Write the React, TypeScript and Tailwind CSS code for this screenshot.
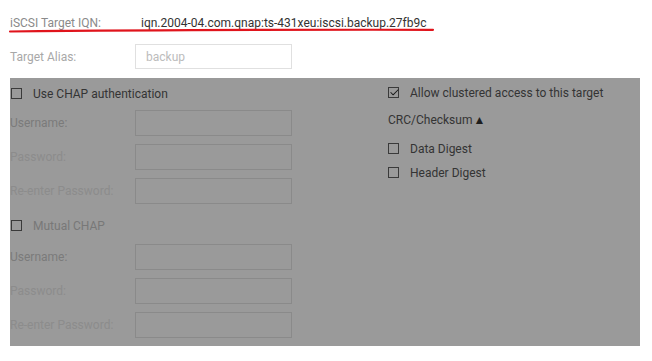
import { Check } from "lucide-react";

function Box({ checked }: { checked?: boolean }) {
	return (
		<span className="relative flex h-[11px] w-[11px] shrink-0 items-center justify-center border border-[#3a3a3a]">
			{checked ? <Check className="absolute -top-[1px] left-0 h-[11px] w-[11px] text-[#1a1a1a]" strokeWidth={2.2} /> : null}
		</span>
	);
}

function Field({ label, tone }: { label: string; tone: string }) {
	return (
		<div className="flex h-[26px] items-center">
			<span className={`w-[125px] ${tone}`}>{label}</span>
			<div className="h-[26px] w-[157px] border border-[#8a8a8a]" />
		</div>
	);
}

export default function App() {
	return (
		<div
			className="relative min-h-[361px] w-[652px] bg-white pl-[10px] pt-[13px] text-[12px] leading-none"
			style={{ fontFamily: "Roboto, 'Liberation Sans', sans-serif" }}
		>
			{/* iqn */}
			<div className="flex h-[20px] items-center">
				<span className="w-[131px] text-[#8a8a8a]">iSCSI Target IQN:</span>
				<span className="text-[#333]">iqn.2004-04.com.qnap:ts-431xeu:iscsi.backup.27fb9c</span>
			</div>

			<div className="mt-[11px] flex h-[25px] items-center">
				<span className="w-[125px] text-[#a8a8a8]">Target Alias:</span>
				<div className="flex h-[25px] w-[157px] items-center border border-[#e0e0e0] pl-[10px] text-[#bcbcbc]">
					backup
				</div>
			</div>

			{/* disabled panel */}
			<div className="mt-[9px] flex h-[268px] w-[630px] bg-[#9a9a9a]">
				<div className="w-[378px]">
					<div className="mt-[10px] flex h-[11px] items-center gap-[11px] pl-[1px]">
						<Box />
						<span className="text-[#343434]">Use CHAP authentication</span>
					</div>
					<div className="mt-[11px] flex flex-col gap-[8px]">
						<Field label="Username:" tone="text-[#7b7b7b]" />
						<Field label="Password:" tone="text-[#8c8c8c]" />
						<Field label="Re-enter Password:" tone="text-[#8c8c8c]" />
					</div>
					<div className="mt-[16px] flex h-[11px] items-center gap-[11px] pl-[1px]">
						<Box />
						<span className="text-[#787878]">Mutual CHAP</span>
					</div>
					<div className="mt-[13px] flex flex-col gap-[8px]">
						<Field label="Username:" tone="text-[#7b7b7b]" />
						<Field label="Password:" tone="text-[#8c8c8c]" />
						<Field label="Re-enter Password:" tone="text-[#8c8c8c]" />
					</div>
				</div>

				<div className="pt-[9px]">
					<div className="flex h-[11px] items-center gap-[11px]">
						<Box checked />
						<span className="text-[#343434]">Allow clustered access to this target</span>
					</div>
					<div className="mt-[16px] flex h-[11px] items-center text-[#343434]">
						CRC/Checksum<span className="ml-[1px] text-[12px] text-[#1e1e1e]">▲</span>
					</div>
					<div className="mt-[18px] flex flex-col gap-[13px]">
						<div className="flex h-[11px] items-center gap-[11px]">
							<Box />
							<span className="text-[#343434]">Data Digest</span>
						</div>
						<div className="flex h-[11px] items-center gap-[11px]">
							<Box />
							<span className="text-[#343434]">Header Digest</span>
						</div>
					</div>
				</div>
			</div>

			{/* red annotation underline */}
			<svg className="pointer-events-none absolute left-0 top-0" width="652" height="40">
				<path d="M10 31.5 Q 200 29.5 433 29.8" stroke="#e0141c" strokeWidth="2.2" fill="none" strokeLinecap="round" />
			</svg>
		</div>
	);
}
